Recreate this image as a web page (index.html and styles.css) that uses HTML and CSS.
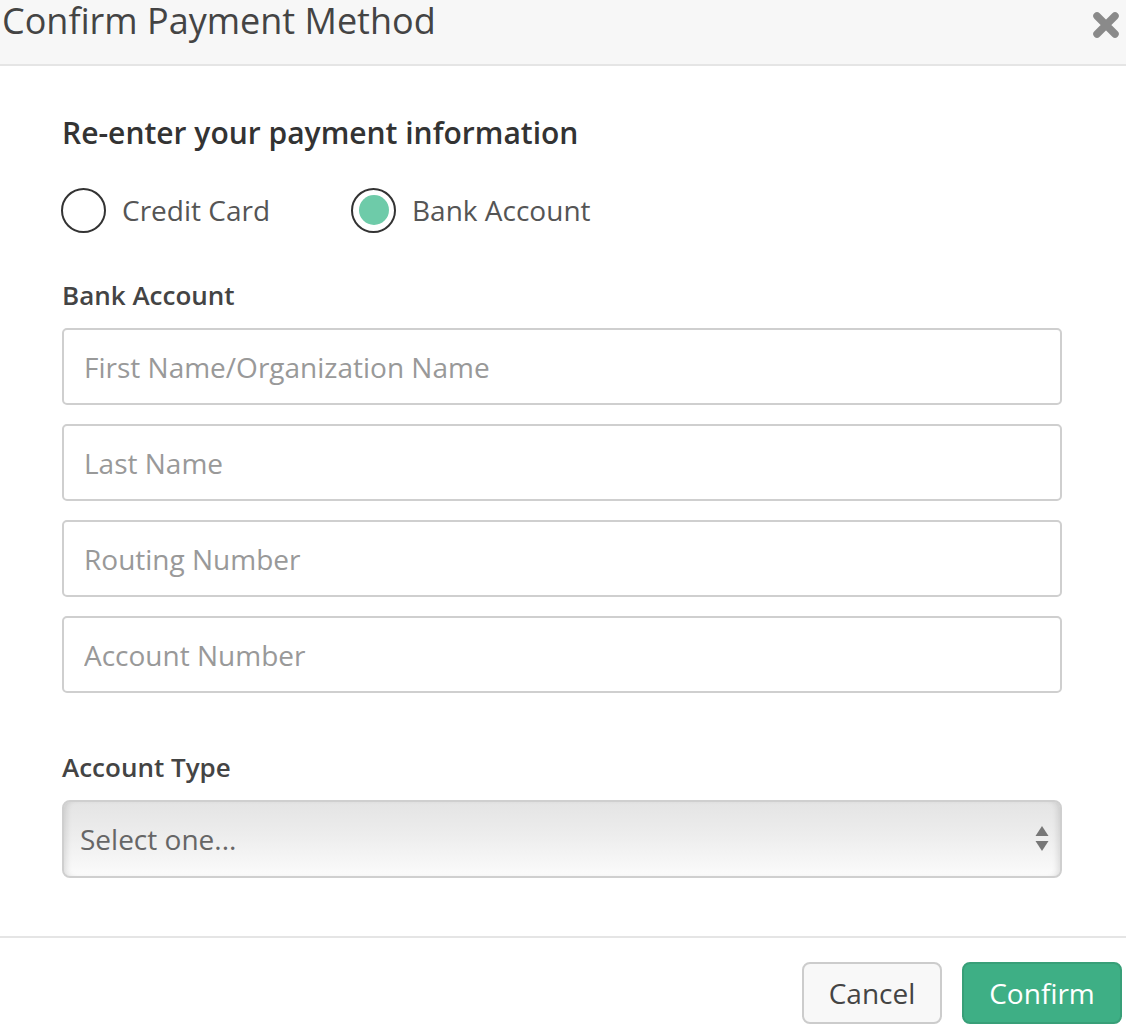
FILE: index.html
```html
<!DOCTYPE html>
<html>
<head>
<meta charset="utf-8">
<link rel="stylesheet" href="styles.css">
</head>
<body>
<div class="modal">
  <div class="modal-header">
    <h1 class="modal-title">Confirm Payment Method</h1>
    <button class="close" aria-label="Close">
      <svg width="28" height="28" viewBox="0 0 28 28"><path d="M5 5 L23 23 M23 5 L5 23" stroke="#8a8a8a" stroke-width="7.5" stroke-linecap="round"/></svg>
    </button>
  </div>
  <div class="modal-body">
    <h2 class="section-title">Re-enter your payment information</h2>
    <div class="radio-row">
      <label class="radio"><span class="radio-circle"></span><span>Credit Card</span></label>
      <label class="radio"><span class="radio-circle checked"><span class="dot"></span></span><span>Bank Account</span></label>
    </div>
    <div class="field-label">Bank Account</div>
    <div class="fields">
      <input class="text-input" type="text" placeholder="First Name/Organization Name">
      <input class="text-input" type="text" placeholder="Last Name">
      <input class="text-input" type="text" placeholder="Routing Number">
      <input class="text-input" type="text" placeholder="Account Number">
    </div>
    <div class="field-label type-label">Account Type</div>
    <div class="select-wrap">
      <div class="select">Select one...</div>
      <span class="select-arrows">
        <svg width="14" height="28" viewBox="0 0 14 28"><path d="M7 1 L13.5 11 L0.5 11 Z" fill="#777"/><path d="M0.5 16 L13.5 16 L7 26 Z" fill="#777"/></svg>
      </span>
    </div>
  </div>
  <div class="modal-footer">
    <button class="btn btn-cancel">Cancel</button>
    <button class="btn btn-confirm">Confirm</button>
  </div>
</div>
</body>
</html>
```
FILE: styles.css
```css
html, body {
  margin: 0;
  padding: 0;
  background: #fff;
}
body {
  font-family: "Open Sans", "DejaVu Sans", sans-serif;
  color: #444;
  width: 1126px;
  height: 1032px;
  overflow: hidden;
}
.modal {
  width: 1126px;
}
.modal-header {
  background: #f7f7f7;
  border-bottom: 2px solid #e5e5e5;
  height: 64px;
  display: flex;
  justify-content: space-between;
  align-items: flex-start;
  padding: 0 6px 0 2px;
}
.modal-title {
  margin: 0;
  font-size: 36px;
  font-weight: 400;
  line-height: 44px;
  margin-top: -1px;
  color: #444;
}
.close {
  border: 0;
  background: none;
  padding: 0;
  margin-top: 11px;
  width: 28px;
  height: 28px;
  display: block;
}
.close svg { display: block; }
.modal-body {
  padding: 47px 64px 0 62px;
}
.section-title {
  margin: 0;
  font-size: 30px;
  font-weight: 600;
  line-height: 40px;
  color: #333;
}
.radio-row {
  display: flex;
  gap: 82px;
  margin-top: 34px;
  height: 46px;
  align-items: center;
}
.radio {
  display: flex;
  align-items: center;
  gap: 16px;
  font-size: 28px;
  color: #555;
}
.radio-circle {
  width: 41px;
  height: 41px;
  border: 2px solid #333;
  border-radius: 50%;
  display: flex;
  align-items: center;
  justify-content: center;
  margin-left: -1px;
}
.dot {
  width: 30px;
  height: 30px;
  border-radius: 50%;
  background: #6ecba9;
}
.field-label {
  font-size: 26px;
  font-weight: 600;
  line-height: 36px;
  color: #444;
  margin-top: 44px;
}
.fields {
  display: flex;
  flex-direction: column;
  gap: 19px;
  margin-top: 15px;
}
.text-input {
  box-sizing: border-box;
  width: 1000px;
  height: 77px;
  border: 2px solid #cfcfcf;
  border-radius: 5px;
  padding: 0 20px;
  font-family: "Open Sans", sans-serif;
  font-size: 28px;
  color: #444;
  background: #fff;
  outline: none;
  margin: 0;
}
.text-input::placeholder {
  color: #999;
}
.type-label {
  margin-top: 56px;
}
.select-wrap {
  position: relative;
  margin-top: 15px;
  width: 1000px;
}
.select {
  box-sizing: border-box;
  height: 78px;
  border: 2px solid #cfcfcf;
  border-radius: 8px;
  padding: 0 16px;
  display: flex;
  align-items: center;
  font-size: 28px;
  color: #666;
  background: linear-gradient(to bottom, #e4e4e4 0%, #ededed 45%, #fbfbfb 100%);
  box-shadow: inset 6px 0 6px -4px rgba(0,0,0,0.12), inset -6px 0 6px -4px rgba(0,0,0,0.12);
}
.select-arrows {
  position: absolute;
  right: 13px;
  top: 25px;
  width: 14px;
  height: 28px;
}
.select-arrows svg { display: block; }
.modal-footer {
  margin-top: 58px;
  border-top: 2px solid #e5e5e5;
  padding: 24px 4px 0 0;
  display: flex;
  justify-content: flex-end;
  gap: 20px;
}
.btn {
  font-family: "Open Sans", sans-serif;
  font-size: 28px;
  height: 62px;
  border-radius: 8px;
  padding: 0;
  box-sizing: border-box;
}
.btn-cancel {
  width: 140px;
  background: #f8f8f8;
  border: 2px solid #cccccc;
  color: #444;
}
.btn-confirm {
  width: 160px;
  background: #3eaf85;
  border: 2px solid #389f78;
  color: #fff;
}
```
